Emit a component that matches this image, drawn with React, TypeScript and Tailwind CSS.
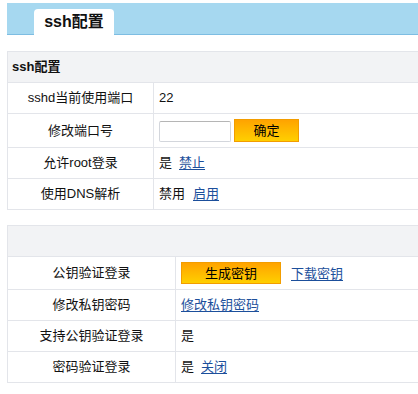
import React from "react";

const font = { fontFamily: '"Liberation Sans", "Noto Sans CJK SC", sans-serif' };

function Row({ label, labelW, h, children }: { label: string; labelW: string; h: string; children: React.ReactNode }) {
    return (
        <div className={`flex border-b border-[#e3e5ea] ${h}`}>
            <div className={`${labelW} shrink-0 border-r border-[#e3e5ea] flex items-center justify-center`}>
                {label}
            </div>
            <div className="flex items-center pl-[5px]">{children}</div>
        </div>
    );
}

function OrangeButton({ children, className }: { children: React.ReactNode; className: string }) {
    return (
        <button className={`border border-[#f29d00] bg-gradient-to-b from-[#ffa300] to-[#ffcf00] text-[13px] text-black leading-none ${className}`}>
            {children}
        </button>
    );
}

const Link = ({ children, className = "" }: { children: React.ReactNode; className?: string }) => (
    <a href="#" className={`text-[#1c4f9b] underline underline-offset-2 ${className}`}>
        {children}
    </a>
);

export default function App() {
    return (
        <div className="w-[418px] h-[394px] overflow-hidden bg-white pt-[3px] pl-[7px] text-[13px] text-[#111]" style={font}>
            {/* tab bar */}
            <div className="w-[420px] h-[32px] bg-[#a6d8f0] border-b border-[#7dbde2] flex items-end">
                <div className="relative -mb-[1px] ml-[27px] w-[80px] h-[26px] bg-white rounded-t-[4px] flex items-center justify-center font-bold text-[16px] text-[#111]">
                    ssh配置
                </div>
            </div>

            {/* ssh config */}
            <div className="mt-[16px] w-[420px] border-l border-t border-[#e3e5ea]">
                <div className="h-[31px] bg-[#f2f3f5] border-b border-[#e3e5ea] flex items-center pl-[4px] font-bold">
                    ssh配置
                </div>
                <Row label="sshd当前使用端口" labelW="w-[146px]" h="h-[31px]">
                    22
                </Row>
                <Row label="修改端口号" labelW="w-[146px]" h="h-[34px]">
                    <input className="w-[72px] h-[21px] border border-[#d3d6dc] border-t-[#b5b5b5] rounded-[2px] mt-[2px]" />
                    <OrangeButton className="ml-[3px] w-[65px] h-[23px]">确定</OrangeButton>
                </Row>
                <Row label="允许root登录" labelW="w-[146px]" h="h-[31px]">
                    是<Link className="ml-[7px]">禁止</Link>
                </Row>
                <Row label="使用DNS解析" labelW="w-[146px]" h="h-[31px]">
                    禁用<Link className="ml-[8px]">启用</Link>
                </Row>
            </div>

            {/* key login */}
            <div className="mt-[15px] w-[420px] border-l border-t border-[#e3e5ea]">
                <div className="h-[31px] bg-[#f2f3f5] border-b border-[#e3e5ea]" />
                <Row label="公钥验证登录" labelW="w-[168px]" h="h-[33px]">
                    <OrangeButton className="w-[100px] h-[22px]">生成密钥</OrangeButton>
                    <Link className="ml-[10px] mt-[2px]">下载密钥</Link>
                </Row>
                <Row label="修改私钥密码" labelW="w-[168px]" h="h-[31px]">
                    <Link>修改私钥密码</Link>
                </Row>
                <Row label="支持公钥验证登录" labelW="w-[168px]" h="h-[31px]">
                    是
                </Row>
                <Row label="密码验证登录" labelW="w-[168px]" h="h-[31px]">
                    是<Link className="ml-[7px]">关闭</Link>
                </Row>
            </div>
        </div>
    );
}
